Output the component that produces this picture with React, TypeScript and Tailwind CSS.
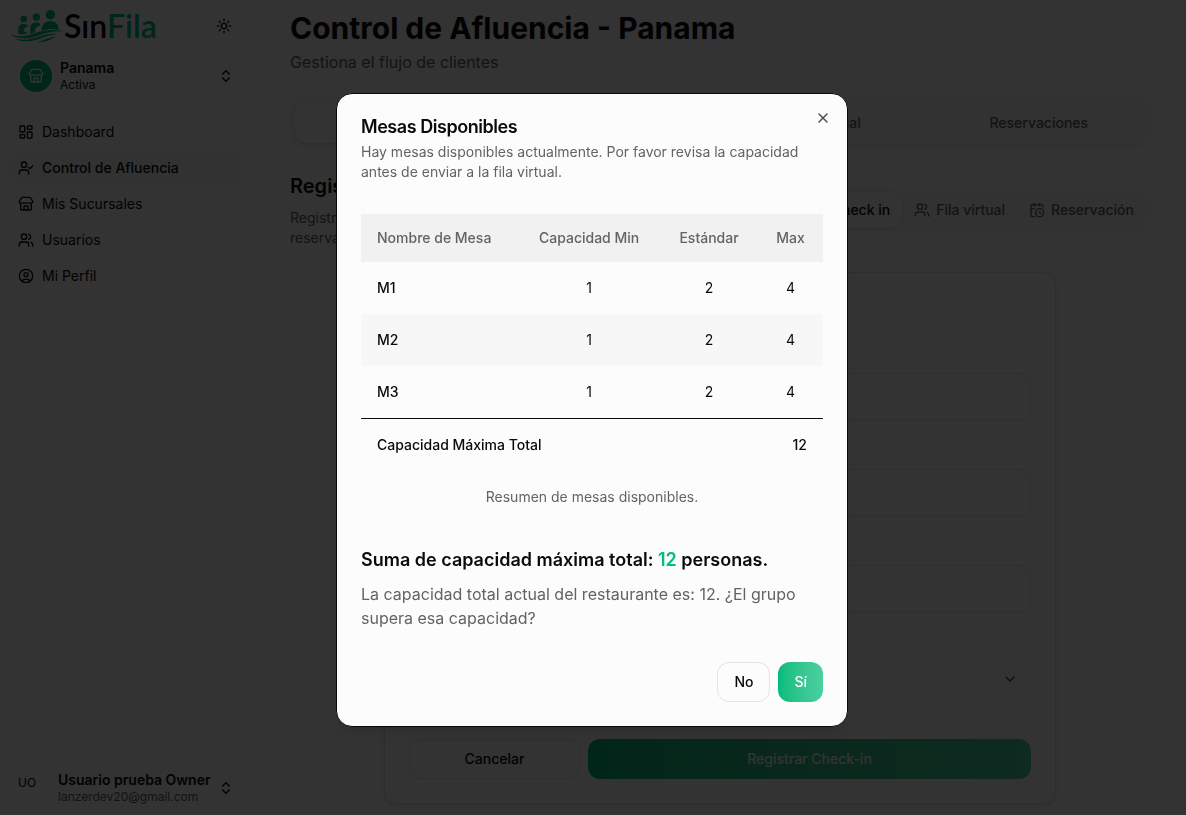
import type { ReactNode } from 'react'
import {
  CalendarClock,
  ChevronDown,
  ChevronsUpDown,
  CircleUser,
  LayoutDashboard,
  Store,
  Sun,
  UserCheck,
  Users,
  X,
} from 'lucide-react'
import clsx from 'clsx'

const NAV_ITEMS = [
  { label: 'Dashboard', icon: LayoutDashboard },
  { label: 'Control de Afluencia', icon: UserCheck, active: true },
  { label: 'Mis Sucursales', icon: Store },
  { label: 'Usuarios', icon: Users },
  { label: 'Mi Perfil', icon: CircleUser },
]

const PAGE_TABS = ['Registro', 'Mesas', 'Fila virtual', 'Reservaciones']

const FIELDS = [
  { id: 'nombre', label: 'Nombre', type: 'text' },
  { id: 'telefono', label: 'Teléfono', type: 'tel' },
  { id: 'personas', label: 'Personas', type: 'text' },
]

const TABLES = [
  { name: 'M1', min: 1, standard: 2, max: 4 },
  { name: 'M2', min: 1, standard: 2, max: 4 },
  { name: 'M3', min: 1, standard: 2, max: 4 },
]

const totalCapacity = TABLES.reduce((sum, table) => sum + table.max, 0)

function Logo() {
  return (
    <a href="#" className="flex items-center" aria-label="SinFila">
      <svg viewBox="0 0 54 34" className="h-[34px] w-[54px] shrink-0 fill-[#00bc7d]" aria-hidden="true">
        <circle cx="13.7" cy="10" r="3.3" />
        <circle cx="26.3" cy="8.2" r="3.6" />
        <circle cx="40.4" cy="5.8" r="4.7" />
        <path d="M8.300 25V20.300c0-3.200 2-5.300 5-5.300h2c1.600 0 2.600 1 2.600 2.600-3 .5-4.400 2.200-4.200 5.200h3.300v1.600c-2 .8-5 1.300-8.700.6z" />
        <path d="M20.300 24.500V19.300c0-3.400 2.200-5.700 5.500-5.700h1.500c1.700 0 2.800 1 2.800 2.800-3.600.8-5.200 2.700-5 6v.4h-1.300V24z" />
        <path d="M31.800 21.600c0-6 3.400-9.500 8.600-9.500s8 3.500 8.200 8.600c-5-1.300-10.500-.9-16.800.9z" />
        <path d="M0 25.300c9 3.200 16 2 24-.8 9-3.300 18-4.800 30-2.200-11-.4-18 1.200-26 4.400C17 30.700 7 30.200 0 25.300z" />
        <path d="M4 29.500c9 2.500 17 1 25-2 7-2.600 13-3.600 20-2.300-8 .3-13 2-19 4.300-9 3.500-18 4-26 0z" />
        <path d="M27 32.800c6-.5 10-4.600 19-5.100-5 2.300-10 6.100-19 5.100z" />
      </svg>
      <span className="font-['Lato',sans-serif] text-[32px] leading-8 font-semibold text-black">
        Sın<span className="text-[#00bc7d]">Fila</span>
      </span>
    </a>
  )
}

function Sidebar() {
  return (
    <aside className="flex w-[253px] shrink-0 flex-col border-r border-[#f7f7f7] px-2.5 pt-2">
      <div className="flex h-9 items-center justify-between">
        <Logo />
        <button type="button" aria-label="Cambiar tema" className="p-2.5">
          <Sun className="size-4" />
        </button>
      </div>

      <button type="button" className="mt-2 ml-0.5 flex h-12 items-center gap-2 rounded-xl p-2 text-left">
        <span className="flex size-8 items-center justify-center rounded-full bg-[#00bc7d] text-white">
          <Store className="size-4" />
        </span>
        <span className="flex flex-1 flex-col">
          <span className="text-sm leading-[18px] font-semibold">Panama</span>
          <span className="text-xs leading-4">Activa</span>
        </span>
        <ChevronsUpDown className="size-4" />
      </button>

      <nav className="mt-4 flex flex-col gap-1">
        {NAV_ITEMS.map(({ label, icon: Icon, active }) => (
          <a
            key={label}
            href="#"
            className={clsx(
              'flex h-8 items-center gap-2 rounded-xl px-2 text-sm',
              active && 'bg-[#f7f7f7] font-medium'
            )}
          >
            <Icon className="size-4" />
            {label}
          </a>
        ))}
      </nav>

      <button type="button" className="mt-auto mb-[3px] flex h-12 items-center gap-2 rounded-xl p-2 text-left">
        <span className="size-8 shrink-0 text-xs leading-[22px]">UO</span>
        <span className="flex min-w-0 flex-1 flex-col">
          <span className="text-sm leading-[18px] font-semibold whitespace-nowrap">Usuario prueba Owner</span>
          <span className="text-xs leading-4 text-[#636363]">lanzerdev20@gmail.com</span>
        </span>
        <ChevronsUpDown className="size-4 shrink-0" />
      </button>
    </aside>
  )
}

function ModeTab({ active, children }: { active?: boolean; children: ReactNode }) {
  return (
    <button
      type="button"
      className={clsx(
        'flex h-9 items-center gap-1.5 rounded-xl px-3 text-sm font-medium whitespace-nowrap',
        active ? 'bg-[#fcfcfc] shadow-sm' : 'text-[#636363]'
      )}
    >
      {children}
    </button>
  )
}

function CheckInForm() {
  return (
    <form className="mx-auto mt-6 w-full max-w-2xl rounded-xl border border-[#e4e4e4] p-6 shadow-sm">
      <h3 className="text-xl leading-7 font-semibold">Datos del cliente</h3>
      {FIELDS.map((field) => (
        <div key={field.id} className="mt-5 flex flex-col gap-2">
          <label htmlFor={field.id} className="text-sm leading-5 font-medium">
            {field.label}
          </label>
          <input
            id={field.id}
            type={field.type}
            className="h-12 w-full rounded-xl border border-[#e4e4e4] bg-transparent px-3"
          />
        </div>
      ))}
      <button
        type="button"
        className="mt-[46px] flex h-10 w-full items-center justify-between border border-transparent px-3 text-sm font-medium"
      >
        Información adicional
        <ChevronDown className="size-4 text-[#4a4a4a]" />
      </button>
      <div className="mt-10 flex gap-2">
        <button type="button" className="h-10 w-[171px] rounded-xl border border-[#e4e4e4] text-sm font-medium">
          Cancelar
        </button>
        <button
          type="button"
          className="h-10 flex-1 rounded-xl bg-linear-to-r from-[#00bc7d] to-[#4bd0a0] text-sm font-medium text-white"
        >
          Registrar Check-in
        </button>
      </div>
    </form>
  )
}

function TablesDialog() {
  return (
    <div className="fixed inset-0 flex items-center justify-center bg-black/80 pt-[5px] pr-0.5">
      <div
        role="dialog"
        aria-modal="true"
        aria-labelledby="dialog-title"
        className="relative w-full max-w-lg rounded-2xl border border-[#0a0a0a] bg-[#fcfcfc] p-6 shadow-lg"
      >
        <button type="button" aria-label="Cerrar" className="absolute top-4 right-4 text-[#4a4a4a]">
          <X className="size-4" />
        </button>

        <h2 id="dialog-title" className="text-lg leading-none font-semibold tracking-tight">
          Mesas Disponibles
        </h2>
        <p className="mt-1.5 text-sm text-[#636363]">
          Hay mesas disponibles actualmente. Por favor revisa la capacidad antes de enviar a la fila virtual.
        </p>

        <table className="mt-8 w-full caption-bottom text-sm">
          <caption className="mt-4 text-[#636363]">Resumen de mesas disponibles.</caption>
          <thead className="bg-[#f1f1f1] text-[#636363]">
            <tr className="h-12">
              <th className="px-4 text-left font-medium">Nombre de Mesa</th>
              <th className="px-4 text-center font-medium">Capacidad Min</th>
              <th className="px-4 text-center font-medium">Estándar</th>
              <th className="px-4 text-center font-medium">Max</th>
            </tr>
          </thead>
          <tbody>
            {TABLES.map((table) => (
              <tr key={table.name} className="even:bg-[#f7f7f7]">
                <td className="p-4 font-medium">{table.name}</td>
                <td className="p-4 text-center">{table.min}</td>
                <td className="p-4 text-center">{table.standard}</td>
                <td className="p-4 text-center">{table.max}</td>
              </tr>
            ))}
          </tbody>
          <tfoot className="border-t border-[#0a0a0a] font-medium">
            <tr>
              <td colSpan={3} className="p-4">
                Capacidad Máxima Total
              </td>
              <td className="p-4 text-right">{totalCapacity}</td>
            </tr>
          </tfoot>
        </table>

        <h3 className="mt-[39px] text-lg leading-7 font-semibold">
          Suma de capacidad máxima total: <span className="text-[#00bc7d]">{totalCapacity}</span> personas.
        </h3>
        <p className="mt-2 text-base text-[#636363]">
          La capacidad total actual del restaurante es: {totalCapacity}. ¿El grupo supera esa capacidad?
        </p>

        <div className="mt-8 flex justify-end gap-2">
          <button type="button" className="h-10 rounded-xl border border-[#e4e4e4] px-4 text-sm font-medium">
            No
          </button>
          <button
            type="button"
            className="h-10 rounded-xl bg-linear-to-r from-[#00bc7d] to-[#4bd0a0] px-4 text-sm font-medium text-white"
          >
            Sí
          </button>
        </div>
      </div>
    </div>
  )
}

export default function App() {
  return (
    <div className="flex min-h-screen border-r-[3px] border-white bg-[#fcfcfc] font-['Inter',sans-serif] text-[#0a0a0a]">
      <Sidebar />

      <main className="min-w-0 flex-1 pt-2.5 pr-[33px] pb-2.5 pl-[37px]">
        <h1 className="text-3xl leading-9 font-bold">Control de Afluencia - Panama</h1>
        <p className="mt-1 text-base text-[#636363]">Gestiona el flujo de clientes</p>

        <div className="mt-6 grid h-[50px] grid-cols-4 rounded-2xl border border-[#efefef] bg-[#f9f9f9] p-1">
          {PAGE_TABS.map((tab, index) => (
            <button
              key={tab}
              type="button"
              className={clsx(
                'rounded-xl text-sm font-medium',
                index === 0 ? 'bg-[#fcfcfc] shadow-sm' : 'text-[#636363]'
              )}
            >
              {tab}
            </button>
          ))}
        </div>

        <section className="mt-6 flex items-center justify-between gap-4">
          <div className="max-w-md">
            <h2 className="text-xl leading-7 font-semibold">Registro de Clientes</h2>
            <p className="mt-2 text-sm text-[#636363]">
              Registra la llegada de clientes, agrega a la fila o crea una
              <br />
              reservación.
            </p>
          </div>
          <div className="flex h-11 shrink-0 items-center rounded-2xl bg-[#f7f7f7] p-1">
            <ModeTab active>
              <UserCheck className="size-4" />
              Check in
            </ModeTab>
            <ModeTab>
              <Users className="size-4" />
              Fila virtual
            </ModeTab>
            <ModeTab>
              <CalendarClock className="size-4" />
              Reservación
            </ModeTab>
          </div>
        </section>

        <CheckInForm />
      </main>

      <TablesDialog />
    </div>
  )
}
